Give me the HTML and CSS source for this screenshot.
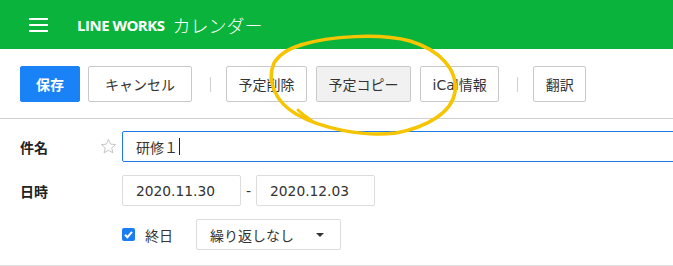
FILE: index.html
```html
<!DOCTYPE html>
<html lang="ja">
<head>
    <meta charset="UTF-8">
    <title>LINE WORKS カレンダー</title>
    <link rel="stylesheet" href="styles.css">
</head>
<body>
    <header class="topbar">
        <span class="menu-icon"><i></i><i></i><i></i></span>
        <span class="brand">LINE WORKS</span>
        <span class="app-name">カレンダー</span>
    </header>

    <div class="toolbar">
        <button class="btn btn-primary">保存</button>
        <button class="btn btn-cancel">キャンセル</button>
        <span class="divider"></span>
        <button class="btn">予定削除</button>
        <button class="btn btn-active">予定コピー</button>
        <button class="btn">iCal情報</button>
        <span class="divider"></span>
        <button class="btn">翻訳</button>
    </div>

    <div class="form">
        <div class="row">
            <span class="label">件名</span>
            <svg class="star" width="17" height="17" viewBox="0 0 24 24"><polygon points="12,2 14.9,8.6 22,9.3 16.6,14 18.2,21 12,17.3 5.8,21 7.4,14 2,9.3 9.1,8.6" fill="none" stroke="#c4c4c4" stroke-width="1.4" stroke-linejoin="round"/></svg>
            <div class="field field-title">研修１<span class="caret"></span></div>
        </div>
        <div class="row">
            <span class="label">日時</span>
            <span></span>
            <div class="dates">
                <div class="field field-date">2020.11.30</div>
                <span class="dash">-</span>
                <div class="field field-date">2020.12.03</div>
            </div>
        </div>
        <div class="row">
            <span></span>
            <span></span>
            <div class="options">
                <svg class="check" width="13" height="13" viewBox="0 0 13 13"><rect width="13" height="13" rx="2" fill="#1a7ef0"/><path d="M3 6.8 L5.4 9.2 L10 3.9" fill="none" stroke="#fff" stroke-width="2"/></svg>
                <span class="allday">終日</span>
                <div class="field field-select">繰り返しなし<span class="arrow"></span></div>
            </div>
        </div>
    </div>

    <svg class="annotation" width="673" height="266" viewBox="0 0 673 266">
        <path d="M300 45 C330 36, 380 33, 410 41 C440 50, 458 70, 455 92 C452 112, 428 127, 396 133 C364 137, 322 129, 296 114 C276 102, 266 82, 274 63 C281 52, 292 47, 308 43" fill="none" stroke="#f6c400" stroke-width="3.5" stroke-linecap="round"/>
        <path d="M298 110 C302 114, 306 117, 311 120" fill="none" stroke="#f6c400" stroke-width="3" stroke-linecap="round"/>
    </svg>
</body>
</html>
```

FILE: styles.css
```css
body { margin: 0; font-family: "DejaVu Sans", "Noto Sans CJK JP", sans-serif; font-size: 14px; color: #222; background: #fff; overflow: hidden; position: relative; }
.topbar { background-color: #0ab43c; height: 49px; display: flex; align-items: center; padding-left: 29px; color: #fff; }
.menu-icon { display: flex; flex-direction: column; gap: 4px; width: 19px; margin-right: 29px; }
.menu-icon i { display: block; height: 2px; background: #fff; }
.brand { font-family: "Open Sans", sans-serif; font-weight: 700; font-size: 15px; letter-spacing: -0.5px; margin-right: 8px; }
.app-name { font-family: "Noto Sans CJK JP", sans-serif; font-size: 18px; font-weight: 300; }
.toolbar { display: flex; align-items: center; gap: 9px; padding: 17px 20px 16px; border-bottom: 1px solid #cfcfcf; }
.btn { height: 36px; padding: 0 11.5px; border: 1px solid #c9c9c9; border-radius: 2px; background: #fff; font-family: inherit; font-size: 14px; color: #333; }
.btn-primary { background: #1a82f7; border-color: #1a82f7; color: #fff; font-weight: 700; min-width: 60px; margin-right: -1px; }
.btn-cancel { min-width: 104px; }
.btn-active { background: #f1f1f1; }
.divider { width: 1px; height: 15px; background: #cfcfcf; margin: 0 6px 0 9px; }
.form { padding: 12px 0 15px 20px; border-bottom: 1px solid #ddd; display: flex; flex-direction: column; gap: 13px; }
.row { display: grid; grid-template-columns: 80px 22px 1fr; align-items: center; }
.label { font-family: "Noto Sans CJK JP", sans-serif; font-weight: 700; color: #222; }
.field { height: 31px; box-sizing: border-box; border: 1px solid #dcdcdc; border-radius: 2px; display: flex; align-items: center; padding-left: 13px; color: #333; }
.field-title { width: 570px; border-color: #1e7be6; }
.caret { width: 1px; height: 17px; background: #222; margin-left: 1px; }
.dates { display: flex; align-items: center; gap: 5px; }
.field-date { width: 119px; font-size: 13.8px; }
.dash { color: #333; }
.options { display: flex; align-items: center; }
.check { margin-right: 10px; }
.allday { color: #333; margin-right: 23px; }
.field-select { width: 145px; justify-content: space-between; padding-right: 16px; }
.arrow { width: 0; height: 0; border-left: 4px solid transparent; border-right: 4px solid transparent; border-top: 4px solid #333; }
.annotation { position: absolute; left: 0; top: 0; pointer-events: none; }
```
